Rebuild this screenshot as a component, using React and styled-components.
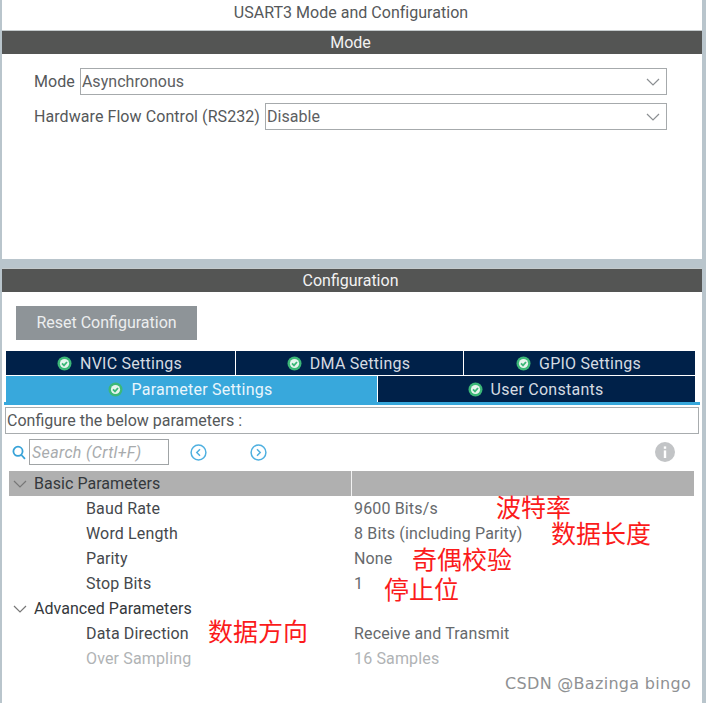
import React from "react";
import styled, { createGlobalStyle } from "styled-components";

const Global = createGlobalStyle`
  html, body { margin: 0; padding: 0; background: #fff; }
  #root { width: 706px; height: 703px; overflow: hidden; }
`;

const Page = styled.div`
  position: relative;
  width: 706px;
  height: 703px;
  box-sizing: border-box;
  padding: 0 4px 0 2px;
  background: #b9c5cc;
  font-family: Roboto, "Liberation Sans", sans-serif;
  font-size: 16px;
  letter-spacing: 0;
  color: #4c4e50;
  display: flex;
  flex-direction: column;
`;
const TopPanel = styled.section`
  height: 259px;
  background: #fff;
  flex: none;
`;
const Title = styled.div`
  height: 27px;
  line-height: 26px;
  text-align: center;
  font-size: 16px;
  letter-spacing: 0.02px;
  color: #55585a;
  padding-right: 2px;
`;
const Bar = styled.div`
  height: ${p => p.$h}px;
  margin-top: ${p => p.$mt || 0}px;
  background: #545554;
  color: #f2f2f2;
  text-align: center;
  line-height: ${p => p.$h - 1}px;
  font-size: 16px;
  letter-spacing: 0;
  padding-right: 3px;
  border-top: 1px solid #c4cacc;
  box-sizing: border-box;
  flex: none;
`;
const ModeForm = styled.div`
  padding: 14px 35px 0 32px;
  display: flex;
  flex-direction: column;
  gap: 8px;
`;
const FormRow = styled.div`
  display: flex;
  align-items: center;
  gap: 5px;
  height: 27px;
`;
const FormLabel = styled.span`
  white-space: nowrap;
  color: #55585a;
  letter-spacing: 0.07px;
`;
const Select = styled.div`
  flex: 1;
  height: 27px;
  box-sizing: border-box;
  border: 1px solid #a6aaac;
  background: #fff;
  display: flex;
  align-items: center;
  justify-content: space-between;
  padding: 0 5px 0 1px;
  color: #5d6062;
  letter-spacing: 0.04px;
`;
const BottomPanel = styled.section`
  flex: 1;
  background: #fff;
  margin-top: 9px;
  display: flex;
  flex-direction: column;
  min-height: 0;
`;
const ResetButton = styled.div`
  align-self: flex-start;
  margin: 14px 0 0 14px;
  width: 181px;
  height: 34px;
  line-height: 33px;
  text-align: center;
  background: #8e9498;
  color: #eceeef;
  font-size: 16px;
  letter-spacing: 0;
`;
const TabRow = styled.div`
  display: flex;
  margin: ${p => p.$mt}px 7px 0 4px;
  gap: 1px;
  height: ${p => p.$h}px;
  flex: none;
`;
const Tab = styled.div`
  flex: none;
  width: ${p => p.$w}px;
  background: ${p => (p.$active ? "#38a8dc" : "#002149")};
  color: ${p => (p.$active ? "#eaf6fc" : "#d5dbe2")};
  display: flex;
  align-items: center;
  justify-content: center;
  gap: 8px;
  letter-spacing: 0.25px;
  font-size: 16px;
  padding-right: 2px;
  box-sizing: border-box;
`;
const TabRule = styled.div`
  height: 3px;
  margin: 0 2px 0 2px;
  background: #38a8dc;
  flex: none;
`;
const ConfigureBox = styled.div`
  height: 27px;
  box-sizing: border-box;
  margin: 2px 3px 0 3px;
  border: 1px solid #a8acae;
  line-height: 25px;
  padding-left: 1px;
  color: #55585a;
  flex: none;
`;
const SearchRow = styled.div`
  height: 26px;
  margin: 5px 27px 0 10px;
  display: flex;
  align-items: center;
  flex: none;
`;
const SearchInput = styled.div`
  width: 140px;
  height: 26px;
  box-sizing: border-box;
  margin-left: 3px;
  border: 1px solid #a0a4a6;
  line-height: 25px;
  padding-left: 2px;
  font-style: italic;
  color: #a8abad;
  font-size: 16px;
  letter-spacing: 0.35px;
`;
const NavButton = styled.span`
  display: flex;
  margin-left: ${p => p.$ml}px;
`;
const InfoButton = styled.span`
  display: flex;
  margin-left: auto;
`;
const Table = styled.div`
  margin: 6px 8px 0 7px;
  display: flex;
  flex-direction: column;
`;
const GroupHead = styled.div`
  display: grid;
  grid-template-columns: 342px 1px 1fr;
  height: 25px;
  background: ${p => (p.$shaded ? "#b0b0b0" : "transparent")};
  flex: none;
`;
const GroupName = styled.div`
  display: flex;
  align-items: center;
  gap: 6px;
  padding-left: 3px;
  color: #34383c;
  line-height: 24px;
  letter-spacing: 0.04px;
`;
const GroupDivider = styled.div`
  background: ${p => (p.$shaded ? "#f2f2f2" : "transparent")};
`;
const Row = styled.div`
  display: grid;
  grid-template-columns: 345px 1fr;
  height: 25px;
  line-height: 25px;
  letter-spacing: 0.15px;
  flex: none;
`;
const RowName = styled.div`
  padding-left: 77px;
  color: ${p => (p.$muted ? "#b0b3b5" : "#45484c")};
`;
const RowValue = styled.div`
  color: ${p => (p.$muted ? "#b0b3b5" : "#66696c")};
`;
const Note = styled.span`
  position: absolute;
  left: ${p => p.$x}px;
  top: ${p => p.$y}px;
  font-family: "Noto Sans CJK SC", sans-serif;
  font-size: 25px;
  line-height: 26px;
  color: #fb1b1b;
  white-space: nowrap;
`;
const Watermark = styled.span`
  position: absolute;
  right: 15px;
  top: 674px;
  font-family: "DejaVu Sans", sans-serif;
  font-size: 16px;
  line-height: 20px;
  letter-spacing: 0.3px;
  color: #8f9193;
  white-space: nowrap;
`;

const Chevron = ({ color = "#8b8f92", size = 16 }) => (
  <svg width={size} height={size} viewBox="0 0 16 16" fill="none" stroke={color} strokeWidth="1.2">
    <path d="M2 5l6 6 6-6" />
  </svg>
);
const Check = () => (
  <svg width="15" height="15" viewBox="0 0 15 15">
    <circle cx="7.5" cy="7.5" r="7" fill="#3cb878" />
    <circle cx="7.5" cy="7.5" r="4.6" fill="#e8f5ee" />
    <path d="M5 7.4l2 2 3-3.4" fill="none" stroke="#3cb878" strokeWidth="1.8" />
  </svg>
);
const SearchIcon = () => (
  <svg width="14" height="15" viewBox="0 0 14 15" fill="none" stroke="#36a2d8" strokeWidth="1.8">
    <circle cx="6" cy="6.3" r="4.6" />
    <path d="M9.4 10l3.6 3.8" />
  </svg>
);
const NavIcon = ({ dir }) => (
  <svg width="17" height="17" viewBox="0 0 17 17" fill="none" stroke="#4fb0e0" strokeWidth="1.5">
    <circle cx="8.5" cy="8.5" r="7.4" />
    <path d={dir === "left" ? "M10 5.3L6.8 8.5l3.2 3.2" : "M7 5.3l3.2 3.2L7 11.7"} />
  </svg>
);
const InfoIcon = () => (
  <svg width="20" height="20" viewBox="0 0 20 20">
    <circle cx="10" cy="10" r="10" fill="#c2c4c6" />
    <rect x="8.8" y="8.4" width="2.4" height="7.6" fill="#fff" />
    <rect x="8.8" y="4.4" width="2.4" height="2.4" fill="#fff" />
  </svg>
);

const basic = [
  ["Baud Rate", "9600 Bits/s"],
  ["Word Length", "8 Bits (including Parity)"],
  ["Parity", "None"],
  ["Stop Bits", "1"],
];
const notes = [
  ["波特率", 496, 493],
  ["数据长度", 551, 519],
  ["奇偶校验", 412, 545],
  ["停止位", 384, 575],
  ["数据方向", 208, 617],
];

export default function App() {
  return (
    <Page>
      <Global />
      <TopPanel>
        <Title>USART3 Mode and Configuration</Title>
        <Bar $h={24} $mt={3}>Mode</Bar>
        <ModeForm>
          <FormRow>
            <FormLabel>Mode</FormLabel>
            <Select>Asynchronous<Chevron /></Select>
          </FormRow>
          <FormRow>
            <FormLabel>Hardware Flow Control (RS232)</FormLabel>
            <Select>Disable<Chevron /></Select>
          </FormRow>
        </ModeForm>
      </TopPanel>
      <BottomPanel>
        <Bar $h={24}>Configuration</Bar>
        <ResetButton>Reset Configuration</ResetButton>
        <TabRow $mt={11} $h={24}>
          <Tab $w={229}><Check />NVIC Settings</Tab>
          <Tab $w={227}><Check />DMA Settings</Tab>
          <Tab $w={231}><Check />GPIO Settings</Tab>
        </TabRow>
        <TabRow $mt={1} $h={26}>
          <Tab $w={371} $active><Check />Parameter Settings</Tab>
          <Tab $w={317}><Check />User Constants</Tab>
        </TabRow>
        <TabRule />
        <ConfigureBox>Configure the below parameters :</ConfigureBox>
        <SearchRow>
          <SearchIcon />
          <SearchInput>Search (Crtl+F)</SearchInput>
          <NavButton $ml={21}><NavIcon dir="left" /></NavButton>
          <NavButton $ml={43}><NavIcon dir="right" /></NavButton>
          <InfoButton><InfoIcon /></InfoButton>
        </SearchRow>
        <Table>
          <GroupHead $shaded>
            <GroupName><Chevron color="#777" />Basic Parameters</GroupName>
            <GroupDivider $shaded />
            <div />
          </GroupHead>
          {basic.map(([k, v]) => (
            <Row key={k}><RowName>{k}</RowName><RowValue>{v}</RowValue></Row>
          ))}
          <GroupHead>
            <GroupName><Chevron color="#777" />Advanced Parameters</GroupName>
            <GroupDivider />
            <div />
          </GroupHead>
          <Row><RowName>Data Direction</RowName><RowValue>Receive and Transmit</RowValue></Row>
          <Row><RowName $muted>Over Sampling</RowName><RowValue $muted>16 Samples</RowValue></Row>
        </Table>
      </BottomPanel>
      {notes.map(([t, x, y]) => <Note key={t} $x={x} $y={y}>{t}</Note>)}
      <Watermark>CSDN @Bazinga bingo</Watermark>
    </Page>
  );
}
